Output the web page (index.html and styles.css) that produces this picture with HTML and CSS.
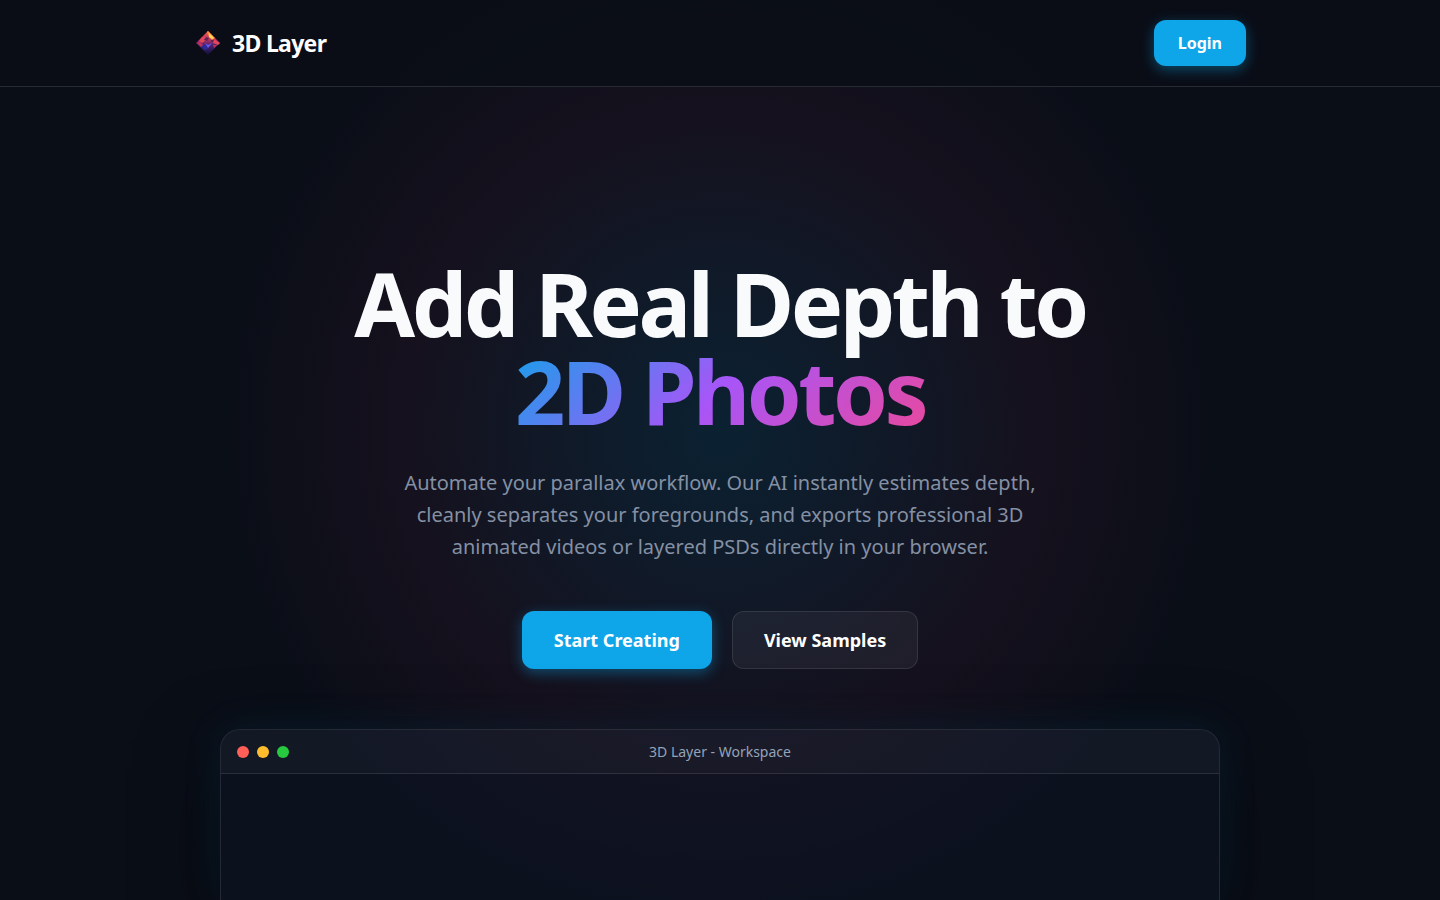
FILE: index.html
```html
<!DOCTYPE html>
<html lang="en">
<head>
<meta charset="utf-8">
<meta name="viewport" content="width=device-width, initial-scale=1">
<title>3D Layer</title>
<link rel="stylesheet" href="styles.css">
</head>
<body>
<header class="site-header">
  <div class="header-inner">
    <a class="brand" href="#">
      <svg class="brand-mark" viewBox="0 0 28 28" aria-hidden="true">
        <defs>
          <linearGradient id="gem" x1="0" y1="0" x2="0" y2="1">
            <stop offset="0" stop-color="#f0604a"/>
            <stop offset=".35" stop-color="#b83460"/>
            <stop offset=".6" stop-color="#4a2270"/>
            <stop offset="1" stop-color="#0d1038"/>
          </linearGradient>
        </defs>
        <path fill="url(#gem)" d="M14 2 26 14 14 26 2 14z"/>
        <path fill="#ff8a3c" d="M13 3l1-1 7 7-3 2-3-3z"/>
        <path fill="#ffd75a" d="M15 4l5 5-2 1-3-2z"/>
        <path fill="#e2445a" d="M8 8l4 0 0 3-4 3-3-2zM20 10l6 4-2 2-5-2z"/>
        <path fill="#5b2458" d="M12 8l3 1-2 3-3-1zM17 11l3 0-2 3z"/>
        <path fill="#2b2a9c" d="M7 16l5 0 2 4-4 1z"/>
        <path fill="#6a5bea" d="M11 14l3 2 4-2-4 5z"/>
        <path fill="#c23058" d="M3 14l3-1 3 3-2 2zM19 16l4 0-3 3z"/>
      </svg>
      <span>3D Layer</span>
    </a>
    <button class="btn btn-primary btn-small" type="button">Login</button>
  </div>
</header>
<main class="hero">
  <h1 class="hero-title">Add Real Depth to<br><span class="gradient-text">2D Photos</span></h1>
  <p class="hero-text">Automate your parallax workflow. Our AI instantly estimates depth, cleanly separates your foregrounds, and exports professional 3D animated videos or layered PSDs directly in your browser.</p>
  <div class="hero-actions">
    <button class="btn btn-primary" type="button">Start Creating</button>
    <button class="btn btn-ghost" type="button">View Samples</button>
  </div>
  <section class="window" aria-label="Workspace preview">
    <div class="window-bar">
      <div class="dots"><i class="dot red"></i><i class="dot yellow"></i><i class="dot green"></i></div>
      <span class="window-title">3D Layer - Workspace</span>
    </div>
    <div class="window-body"></div>
  </section>
</main>
</body>
</html>
```
FILE: styles.css
```css
* { box-sizing: border-box; }

body {
  margin: 0;
  height: 100vh;
  display: flex;
  flex-direction: column;
  overflow: hidden;
  background: #0a0e17;
  color: #f8fafc;
  font-family: "Noto Sans", sans-serif;
}

.site-header {
  position: relative;
  z-index: 1;
  flex: none;
  border-bottom: 1px solid #272b33;
  background: rgba(10, 14, 23, 0.8);
}

.header-inner {
  display: flex;
  align-items: center;
  justify-content: space-between;
  max-width: 1100px;
  margin: 0 auto;
  padding: 20px 24px;
}

.brand {
  display: flex;
  align-items: center;
  gap: 10px;
  color: #fff;
  font-size: 23px;
  line-height: 32px;
  font-weight: 700;
  letter-spacing: -0.03em;
  text-decoration: none;
}

.brand-mark { width: 28px; height: 28px; }

.btn {
  border: 1px solid transparent;
  border-radius: 12px;
  padding: 16px 32px;
  font: 700 18px/24px "Noto Sans", sans-serif;
  color: #fff;
  cursor: pointer;
}

.btn-primary {
  border: 0;
  padding: 17px 32px;
  background: #0ea5e9;
  box-shadow: 0 4px 14px rgba(14, 165, 233, 0.4);
}

.btn-small {
  padding: 11px 24px;
  font-size: 16px;
}

.btn-ghost {
  padding: 16px 31px;
  border-color: rgba(255, 255, 255, 0.1);
  background: rgba(255, 255, 255, 0.05);
}

.hero {
  position: relative;
  flex: 1;
  display: flex;
  flex-direction: column;
  align-items: center;
  padding: 172px 24px 0;
  text-align: center;
}

.hero::before {
  content: "";
  position: absolute;
  z-index: -1;
  left: 50%;
  top: -156px;
  width: 1000px;
  height: 1000px;
  transform: translateX(-50%);
  background: radial-gradient(circle, rgba(14, 165, 233, 0.13) 0%, rgba(236, 72, 153, 0.05) 45%, transparent 70%);
}

.hero-title {
  margin: 0 0 32px;
  font-size: 88px;
  line-height: 88px;
  font-weight: 700;
  letter-spacing: -0.04em;
}

.gradient-text {
  background: linear-gradient(135deg, #0ea5e9 0%, #a855f7 50%, #ec4899 100%);
  -webkit-background-clip: text;
  background-clip: text;
  color: transparent;
}

.hero-text {
  max-width: 650px;
  margin: 0 0 48px;
  font-size: 20px;
  line-height: 32px;
  color: #8490a4;
}

.hero-actions {
  display: flex;
  gap: 20px;
  margin-bottom: 60px;
}

.window {
  flex: 1;
  display: flex;
  flex-direction: column;
  width: 100%;
  max-width: 1000px;
  border: 1px solid rgba(255, 255, 255, 0.1);
  border-bottom: 0;
  border-radius: 20px 20px 0 0;
  overflow: hidden;
  background: rgba(15, 23, 42, 0.4);
  box-shadow: 0 0 40px rgba(14, 165, 233, 0.1), 0 30px 80px rgba(0, 0, 0, 0.5);
}

.window-bar {
  display: grid;
  grid-template-columns: 1fr auto 1fr;
  align-items: center;
  height: 44px;
  padding: 0 16px;
  border-bottom: 1px solid rgba(255, 255, 255, 0.1);
  background: rgba(255, 255, 255, 0.03);
}

.dots { display: flex; gap: 8px; }
.dot { width: 12px; height: 12px; border-radius: 50%; }
.red { background: #ff5f56; }
.yellow { background: #ffbd2e; }
.green { background: #27c93f; }

.window-title {
  font-size: 14px;
  color: #94a3b8;
}

.window-body { flex: 1; }
```
